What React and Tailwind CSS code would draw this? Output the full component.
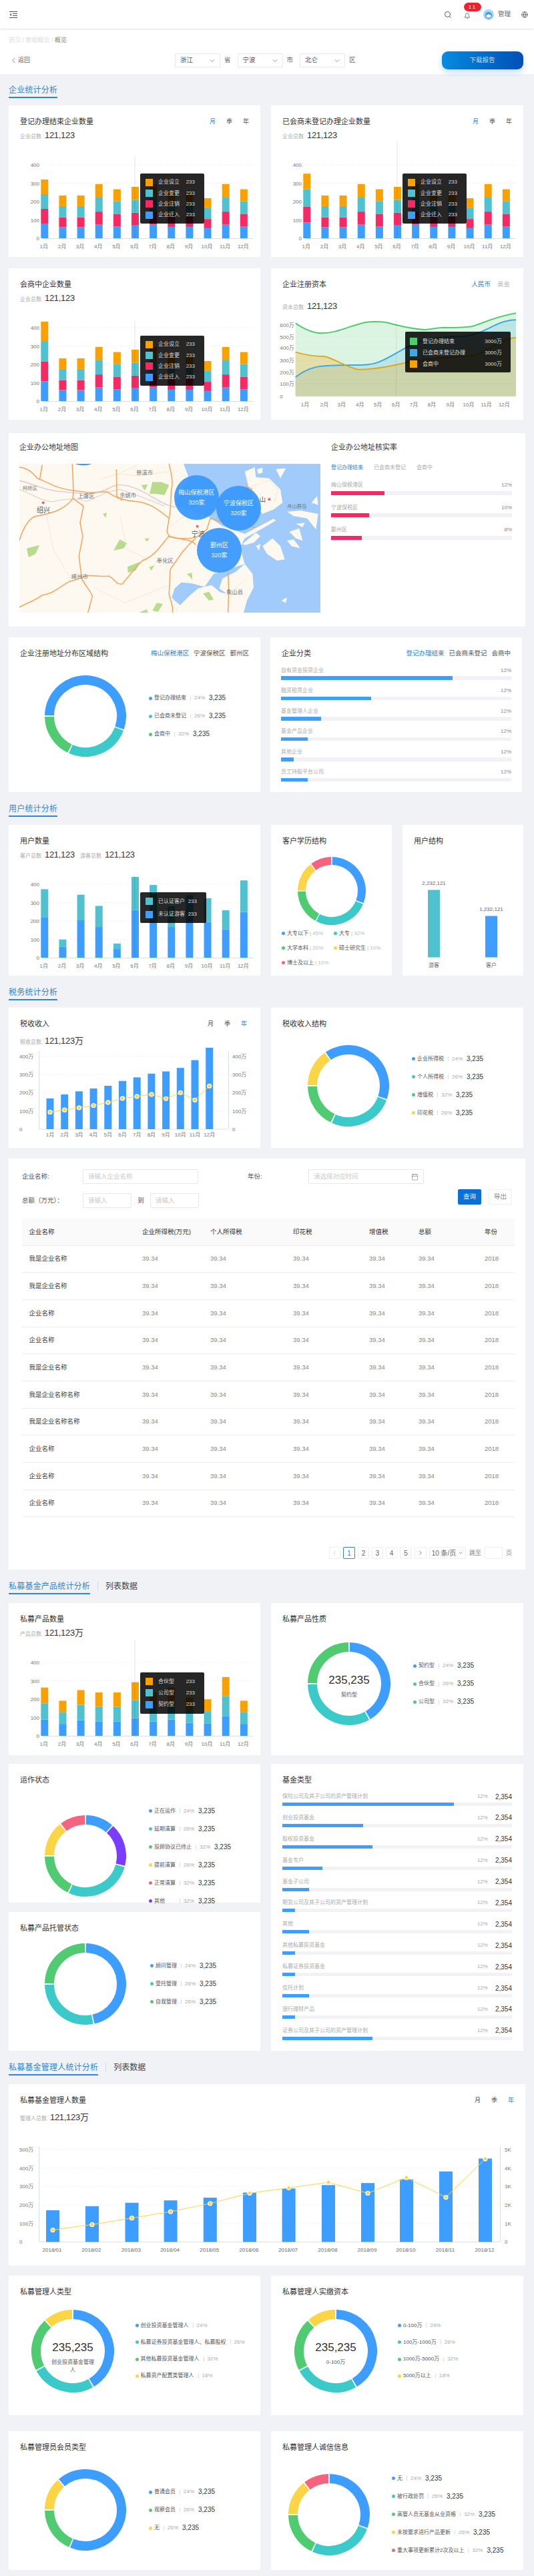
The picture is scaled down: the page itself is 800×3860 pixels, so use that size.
import { Search, Bell, Calendar, ChevronLeft, ChevronRight, ChevronDown, Globe } from "lucide-react";

const BLUE = "#3d9eff";
const RED = "#f42a64";
const TEAL = "#4fc1cf";
const ORANGE = "#f9a100";
const DTEAL = "#3cc9c9";
const GREEN = "#50cb72";
const YELLOW = "#fbd545";
const PINK = "#f4647f";
const PURPLE = "#7a3dff";

const MONTHS = ["1月", "2月", "3月", "4月", "5月", "6月", "7月", "8月", "9月", "10月", "11月", "12月"];

const BASE = [
  [80, 160, 240, 320],
  [60, 114, 175, 233],
  [60, 114, 175, 233],
  [74, 145, 222, 295],
  [65, 133, 201, 267],
  [70, 139, 209, 280],
  [74, 145, 222, 295],
  [62, 125, 187, 250],
  [62, 125, 187, 250],
  [55, 105, 164, 218],
  [74, 145, 222, 295],
  [65, 133, 201, 267],
];
const withFirst = (first) => [first, ...BASE.slice(1)];

const USERS = [
  [221, 373], [59, 99], [204, 343], [167, 282], [47, 77], [260, 440],
  [200, 396], [167, 280], [220, 340], [195, 324], [155, 258], [249, 421],
];
const PRODUCTS = [
  [89, 177, 263], [65, 128, 191], [85, 169, 249], [78, 158, 236], [78, 158, 236], [96, 194, 292],
  [78, 158, 236], [89, 177, 263], [71, 143, 209], [66, 134, 199], [106, 216, 320], [65, 128, 191],
];

const arcPath = (cx, cy, r, a0, a1) => {
  const rad = (a) => ((a - 90) * Math.PI) / 180;
  const x0 = cx + r * Math.cos(rad(a0));
  const y0 = cy + r * Math.sin(rad(a0));
  const x1 = cx + r * Math.cos(rad(a1));
  const y1 = cy + r * Math.sin(rad(a1));
  return `M${x0} ${y0}A${r} ${r} 0 ${a1 - a0 > 180 ? 1 : 0} 1 ${x1} ${y1}`;
};

const Donut = ({ r = 61, thick = 14, segs, children }) => (
  <svg width={r * 2} height={r * 2} className="block shrink-0">
    {segs.map(([color, a0, a1], i) => (
      <path key={i} d={arcPath(r, r, r - thick / 2, a0 + 0.9, a1 - 0.9)} fill="none" stroke={color} strokeWidth={thick} />
    ))}
    {children}
  </svg>
);

const Legend = ({ items, className, rowClass = "h-[27px]" }) => (
  <div className={`flex flex-col ${className}`}>
    {items.map(([color, name, pct, val, nameClass], i) => (
      <div key={i} className={`flex items-center ${rowClass}`}>
        <span className="w-[5px] h-[5px] rounded-full mr-[3px] shrink-0" style={{ background: color }} />
        <span className={`text-[8px] leading-[10px] text-[#555] whitespace-nowrap ${nameClass || ""}`}>{name}</span>
        <span className="w-px h-[7px] bg-[#ddd] ml-[6px] mr-[5px]" />
        <span className="text-[8px] leading-[10px] text-[#aaa]">{pct}</span>
        {val && <span className="text-[10px] leading-[12px] text-[#333] ml-[6px]">{val}</span>}
      </div>
    ))}
  </div>
);

const Card = ({ className = "", children }) => <div className={`relative bg-white ${className}`}>{children}</div>;

const Title = ({ children, right }) => (
  <div className="flex items-center justify-between px-[17px] pt-[17px]">
    <h3 className="text-[11px] leading-[14px] font-normal text-[#333]">{children}</h3>
    {right}
  </div>
);

const Stat = ({ label, value, className = "" }) => (
  <span className={`inline-flex items-baseline ${className}`}>
    <span className="text-[8px] leading-[10px] text-[#aaa]">{label}</span>
    <span className="text-[13px] leading-[16px] tracking-[-0.3px] text-[#333] ml-[5px]">{value}</span>
  </span>
);

const Periods = ({ active, className = "" }) => (
  <div className={`flex gap-[16px] text-[9px] leading-[12px] text-[#555] ${className}`}>
    {["月", "季", "年"].map((p) => (
      <span key={p} className={p === active ? "text-[#2f86d6]" : ""}>{p}</span>
    ))}
  </div>
);

const Tabs = ({ items, className = "" }) => (
  <div className={`flex gap-[7px] text-[9.5px] leading-[12px] text-[#555] ${className}`}>
    {items.map((t, i) => (
      <span key={t} className={i === 0 ? "text-[#2f86d6]" : ""}>{t}</span>
    ))}
  </div>
);

const Tooltip = ({ rows, className, rowClass, nameClass = "w-[41px]" }) => (
  <div className={`absolute bg-black/85 rounded-[2px] ${className}`}>
    {rows.map(([color, name, val]) => (
      <div key={name} className={`flex items-center text-[8px] leading-[10px] text-[#ddd] ${rowClass}`}>
        <span className="w-[11px] h-[11px] mr-[8px] shrink-0" style={{ background: color }} />
        <span className={`whitespace-nowrap ${nameClass}`}>{name}</span>
        <span className="ml-auto whitespace-nowrap">{val}</span>
      </div>
    ))}
  </div>
);

// same geometry on every stacked bar card: 110px for 400, zero line 129px down the svg
const StackChart = ({ data, colors, crossTop }) => (
  <svg width={377} height={157} className="block overflow-visible">
    {[0, 100, 200, 300, 400].map((t) => {
      const y = 129 - t * 0.275;
      return (
        <g key={t}>
          {t > 0 && <line x1={52} x2={366} y1={y} y2={y} stroke="#eee" strokeDasharray="3 2" strokeWidth={0.7} />}
          <text x={46} y={y + 3} textAnchor="end" fontSize={8} fill="#777">{t}</text>
        </g>
      );
    })}
    <line x1={52} x2={366} y1={129.5} y2={129.5} stroke="#d9dfe8" />
    {data.map((stack, i) => {
      const x = 48.3 + i * 27.14;
      return (
        <g key={i}>
          {stack.map((v, j) => {
            const prev = j ? stack[j - 1] : 0;
            return <rect key={j} x={x} width={11} y={129 - v * 0.275} height={(v - prev) * 0.275} fill={colors[j]} />;
          })}
          <text x={x + 4.5} y={144} textAnchor="middle" fontSize={8} fill="#777">{MONTHS[i]}</text>
        </g>
      );
    })}
    <line x1={189} x2={189} y1={crossTop} y2={129} stroke="#000" strokeOpacity={0.15} strokeWidth={0.7} />
  </svg>
);

const StackCard = ({ title, right, stats, data, colors, crossTop, tooltip, className }) => (
  <Card className={className}>
    <div className="h-[70px]">
      <Title right={right}>{title}</Title>
      <div className="px-[17px] mt-[6px] flex gap-[8px]">
        {stats.map(([l, v]) => <Stat key={l} label={l} value={v} />)}
      </div>
    </div>
    <StackChart data={data} colors={colors} crossTop={crossTop} />
    {tooltip}
  </Card>
);

const FourRows = [
  [ORANGE, "企业设立", "233"],
  [TEAL, "企业变更", "233"],
  [RED, "企业注销", "233"],
  [BLUE, "企业迁入", "233"],
];

const Tip4 = ({ className }) => (
  <Tooltip rows={FourRows} className={`left-[197px] w-[96px] h-[75px] pt-[5px] pl-[8px] pr-[14px] ${className}`} rowClass="h-[16.4px]" />
);

const AreaChart = () => {
  const green = "M110,253 C150,280 190,298 230,298 C290,298 340,270 420,250 C460,243 490,245 520,250 C570,262 620,278 690,282 C730,280 740,272 780,272 C830,275 870,272 900,268 C950,255 1000,225 1101,208";
  const blue = "M110,495 C150,465 190,447 240,445 C290,440 350,442 400,441 C440,440 470,435 490,425 C540,405 580,375 640,345 C700,320 780,313 860,312 C910,310 950,290 1000,265 C1040,245 1070,238 1101,238";
  const orange = "M110,383 C150,395 190,402 240,402 C290,415 330,445 390,461 C430,462 480,455 510,450 C570,440 620,425 700,415 C780,405 850,405 920,395 C980,375 1030,325 1101,317";
  const close = " L1101,581 L110,581 Z";
  const labels = [["600万", 263], ["500万", 315], ["400万", 365], ["300万", 422], ["200万", 475], ["100万", 526], ["0", 583]];
  const xs = [153, 240, 317, 400, 480, 562, 642, 722, 806, 888, 968, 1048];
  return (
    <svg width={378} height={165} viewBox="0 195 1134 495" className="block">
      <path d={green + close} fill={GREEN} fillOpacity={0.2} />
      <path d={blue + close} fill="#3ea8e5" fillOpacity={0.2} />
      <path d={orange + close} fill={ORANGE} fillOpacity={0.25} />
      {labels.map(([t, y]) => (
        <g key={t}>
          {t !== "0" && <line x1={110} x2={1101} y1={y} y2={y} stroke="#000" strokeOpacity={0.06} strokeDasharray="9 6" strokeWidth={2} />}
          <text x={40} y={y + 8} fontSize={24} fill="#777">{t}</text>
        </g>
      ))}
      <path d={green} fill="none" stroke={GREEN} strokeWidth={6} />
      <path d={blue} fill="none" stroke="#3ea8e5" strokeWidth={6} />
      <path d={orange} fill="none" stroke="#e0a91a" strokeWidth={6} />
      <line x1={110} x2={1101} y1={582} y2={582} stroke="#d9dfe8" strokeWidth={3} />
      <line x1={563} x2={563} y1={238} y2={580} stroke="#000" strokeOpacity={0.12} strokeWidth={2} />
      {MONTHS.map((m, i) => (
        <text key={m} x={xs[i]} y={627} textAnchor="middle" fontSize={24} fill="#777">{m}</text>
      ))}
    </svg>
  );
};

const MapLabel = ({ x, y, size = 25, fill = "#777", children }) => (
  <text x={x} y={y} textAnchor="middle" fontSize={size} fill={fill}>{children}</text>
);

const MapBubble = ({ className, name }) => (
  <div className={`absolute w-[67px] h-[67px] rounded-full bg-[#3b99fc]/95 flex flex-col items-center justify-center text-[9px] leading-[15px] text-white/90 ${className}`}>
    <span className="whitespace-nowrap">{name}</span>
    <span>320家</span>
  </div>
);

const RoadMap = () => (
  <div className="relative w-[451px] h-[223px] overflow-hidden">
    <svg width={451} height={223} viewBox="27 15 1353 669" className="block">
      <rect x={27} y={15} width={1353} height={669} fill="#fdf9f1" />
      <path d="M765,15 L790,80 L745,150 L725,200 L880,255 L940,295 L1040,330 L1170,262 L1180,270 L1120,305 L1040,350 L1020,390 L1030,430 L1040,465 L1075,510 L1080,570 L1050,630 L1035,684 L1380,684 L1380,15 Z" fill="#a0cbfb" />
      <path d="M712,615 L725,575 L755,548 L800,552 L860,568 L900,510 L1040,465 L1000,500 L940,530 L925,575 L960,600 L930,592 L890,560 L830,575 L790,610 L750,650 L725,630 Z" fill="#a0cbfb" />
      <g fill="#fdf9f1">
        <path d="M1040,50 L1085,30 L1090,75 L1150,80 L1200,130 L1210,190 L1170,220 L1120,240 L1100,215 L1060,130 Z" />
        <path d="M1095,40 L1120,32 L1120,55 L1100,60 Z" />
        <path d="M1180,38 L1225,35 L1200,80 Z" />
        <path d="M1030,375 L1090,325 L1110,340 L1080,370 L1040,380 Z" />
        <path d="M1120,385 L1165,350 L1200,385 L1220,445 L1185,450 L1140,420 Z" />
        <path d="M1090,385 L1110,375 L1105,405 Z" />
        <path d="M1240,320 L1285,305 L1300,360 L1270,350 Z" />
        <path d="M1230,360 L1260,355 L1290,395 L1250,385 Z" />
        <path d="M1230,230 L1290,225 L1370,240 L1360,310 L1320,260 L1260,250 Z" />
        <path d="M1270,285 L1310,280 L1300,300 Z" />
        <path d="M1205,630 L1230,615 L1225,640 Z" />
        <path d="M1340,190 L1365,160 L1370,200 Z" />
      </g>
      <g fill="#b8dc8c">
        <path d="M60,395 L118,380 L100,420 L68,435 Z" />
        <path d="M450,405 L478,355 L512,372 L495,395 Z" />
        <path d="M612,150 L625,97 L665,97 L700,110 L680,155 L640,150 Z" />
        <path d="M513,478 L570,455 L550,495 L515,505 Z" />
        <path d="M402,240 L420,235 L415,258 Z" />
        <path d="M575,110 L605,108 L590,135 Z" />
        <path d="M780,510 L802,505 L805,535 Z" />
        <path d="M852,598 L880,590 L900,625 L880,630 Z" />
        <path d="M625,675 L645,640 L672,645 L650,680 Z" />
        <path d="M610,480 L635,470 L620,495 Z" />
        <path d="M590,350 L612,350 L600,365 Z" />
        <path d="M565,684 L600,668 L605,684 Z" />
      </g>
      <g fill="none" stroke="#f3e3cb" strokeWidth={2.5}>
        <path d="M390,85 L470,60 L560,20" />
        <path d="M470,60 L560,70 L700,50" />
        <path d="M150,250 L180,400 L240,500 L260,540" />
        <path d="M480,250 L510,400 L600,440" />
        <path d="M700,300 L780,240" />
        <path d="M360,570 L500,640 L600,600 L700,560" />
        <path d="M1060,120 L1150,90 L1190,130 L1170,200" />
        <path d="M970,620 L1010,560 L1050,530" />
      </g>
      <g fill="none" stroke="#dfd8d2" strokeWidth={4}>
        <path d="M27,130 C80,150 130,185 180,185 C240,170 300,170 330,185 C380,160 440,135 480,130 C540,150 620,180 680,205" />
      </g>
      <g fill="none" stroke="#e8c3cb" strokeWidth={4}>
        <path d="M27,90 C100,110 160,140 225,140 C300,150 360,160 430,125 C470,100 520,105 600,150 C650,180 690,205 730,210" />
      </g>
      <g fill="none" stroke="#f9a35a" strokeWidth={4.5}>
        <path d="M27,30 C70,35 90,60 110,82 C150,95 200,130 270,135 L340,145 L420,140 C450,160 480,180 560,185 C620,195 650,220 700,260" />
        <path d="M265,15 L270,135 L268,170" />
        <path d="M463,40 L465,160 L490,180" />
        <path d="M130,20 L118,85" />
        <path d="M27,360 C45,300 70,265 95,252 C160,240 230,225 268,170 L315,205 L300,280 L312,340 L295,430 L307,530 C320,560 350,590 355,610 L335,684" />
        <path d="M27,660 C60,640 100,630 130,605 C180,600 220,560 250,545 L300,530 C340,505 370,525 430,520 C460,535 460,560 490,555 C520,520 530,500 580,450 C640,430 670,370 700,340 C760,360 800,350 820,380" />
        <path d="M700,15 C710,60 720,100 710,130 L705,230 L690,320 L700,340 C730,355 800,355 830,340 L870,310 L885,260" />
        <path d="M820,350 C770,390 740,440 705,490 L700,600 C710,640 720,660 715,684" />
        <path d="M965,500 L968,580 L965,684" />
        <path d="M885,260 C950,280 1000,300 1090,300" />
        <path d="M1045,115 L1075,130" />
      </g>
      <ellipse cx={315} cy={12} rx={38} ry={10} fill="#3b99fc" />
      <g fill="#ee5f6c">
        <circle cx={134} cy={190} r={6} />
        <circle cx={827} cy={296} r={6} />
        <circle cx={1150} cy={175} r={6} />
      </g>
      <MapLabel x={590} y={62}>慈溪市</MapLabel>
      <MapLabel x={75} y={131} size={22}>柯桥区</MapLabel>
      <MapLabel x={327} y={169}>上虞区</MapLabel>
      <MapLabel x={515} y={164}>余姚市</MapLabel>
      <MapLabel x={135} y={235} size={30} fill="#555">绍兴</MapLabel>
      <MapLabel x={830} y={341} size={30} fill="#555">宁波</MapLabel>
      <MapLabel x={682} y={459}>奉化区</MapLabel>
      <MapLabel x={298} y={531}>嵊州市</MapLabel>
      <MapLabel x={995} y={599}>象山县</MapLabel>
      <MapLabel x={1275} y={213} size={22}>舟山群岛</MapLabel>
      <MapLabel x={1120} y={186} size={28} fill="#555">山</MapLabel>
    </svg>
    <MapBubble className="left-[232px] top-[17px]" name="梅山保税港区" />
    <MapBubble className="left-[295px] top-[33px]" name="宁波保税区" />
    <MapBubble className="left-[266px] top-[96px]" name="鄞州区" />
  </div>
);

const Progress = ({ label, pct, width, color, trackClass = "h-[5.5px]", labelClass = "text-[#aaa]" }) => (
  <div>
    <div className="flex justify-between text-[8px] leading-[10px]">
      <span className={labelClass}>{label}</span>
      <span className="text-[#888]">{pct}</span>
    </div>
    <div className={`mt-[3.5px] bg-[#f0f2f5] ${trackClass}`}>
      <div className="h-full" style={{ width, background: color }} />
    </div>
  </div>
);

const Section = ({ className, title, list }) => (
  <div className={`flex items-start ${className}`}>
    <span className="text-[12px] leading-[14px] pb-[3px] border-b-2 border-[#2f86d6] text-[#2f86d6] tracking-[0.2px]">{title}</span>
    {list && (
      <>
        <span className="w-px h-[14px] bg-[#d5d9e0] ml-[11px] mr-[11px]" />
        <span className="text-[12px] leading-[14px] text-[#444]">{list}</span>
      </>
    )}
  </div>
);

const FakeSelect = ({ label, className = "" }) => (
  <div className={`flex items-center justify-between w-[68px] h-[21px] pl-[7px] pr-[5px] border border-[#e6e8eb] rounded-[2px] text-[9.5px] text-[#555] ${className}`}>
    {label}
    <ChevronDown size={12} strokeWidth={1.2} className="text-[#555]" />
  </div>
);

const FakeInput = ({ placeholder, className = "", children }) => (
  <div className={`flex items-center justify-between h-[22px] px-[7px] border border-[#e4e6e9] rounded-[2px] text-[9.5px] text-[#ccc] ${className}`}>
    {placeholder}
    {children}
  </div>
);

const TABLE_NAMES = ["我是企业名称", "我是企业名称", "企业名称", "企业名称", "我是企业名称", "我是企业名称名称", "我是企业名称名称", "企业名称", "企业名称", "企业名称"];

const Pager = ({ className = "", children, active }) => (
  <span className={`flex items-center justify-center h-[18px] rounded-[2px] border text-[10px] ${active ? "border-[#2f86d6] text-[#2f86d6]" : "border-[#eceef0] text-[#666]"} ${className}`}>
    {children}
  </span>
);

const FUND_TYPES = [
  ["保险公司及其子公司的资产管理计划", 257],
  ["创业投资基金", 121],
  ["股权投资基金", 135],
  ["基金专户", 60],
  ["基金子公司", 40],
  ["期货公司及其子公司的资产管理计划", 19],
  ["其他", 40],
  ["其他私募投资基金", 19],
  ["私募证券投资基金", 19],
  ["信托计划", 40],
  ["银行理财产品", 19],
  ["证券公司及其子公司的资产管理计划", 135],
];

const CenterText = ({ cx, cy, sub }) => (
  <>
    <text x={cx} y={cy - 0.5} textAnchor="middle" fontSize={17} fill="#333">235,235</text>
    {sub.map((s, i) => (
      <text key={s} x={cx} y={cy + 19 + i * 12} textAnchor="middle" fontSize={8} fill="#555">{s}</text>
    ))}
  </>
);

const TAX_BAR_TOPS = [1346, 1328, 1314, 1301, 1289, 1267, 1251, 1234, 1224, 1208, 1173, 1114];
const TAX_LINE = [1408, 1398, 1388, 1378, 1364, 1346, 1337, 1328, 1347, 1320, 1353, 1290];

const TaxChart = () => {
  const y0 = 122;
  const toY = (z) => y0 - (1485 - z) * 0.3316;
  const cx = (i) => 62 + i * 21.7;
  const ticks = ["0", "100万", "200万", "300万", "400万"];
  return (
    <svg width={377} height={150} className="block">
      {ticks.map((t, i) => {
        const y = y0 - i * 27.3;
        return (
          <g key={t}>
            {i > 0 && <line x1={45} x2={329} y1={y} y2={y} stroke="#eee" strokeDasharray="3 2" strokeWidth={0.7} />}
            <text x={16} y={y + 3} fontSize={8} fill="#777">{t}</text>
            <text x={335} y={y + 3} fontSize={8} fill="#777">{t}</text>
          </g>
        );
      })}
      <path d={`M45.5 5V${y0}H329.5V5`} fill="none" stroke="#d9dfe8" />
      {TAX_BAR_TOPS.map((z, i) => (
        <rect key={i} x={cx(i) - 5.5} width={11} y={toY(z)} height={y0 - toY(z)} fill={BLUE} />
      ))}
      <polyline points={TAX_LINE.map((z, i) => `${cx(i)},${toY(z)}`).join(" ")} fill="none" stroke={YELLOW} strokeWidth={1} />
      {TAX_LINE.map((z, i) => (
        <circle key={i} cx={cx(i)} cy={toY(z)} r={3} fill={YELLOW} stroke="#fff" strokeWidth={1.2} />
      ))}
      {MONTHS.map((m, i) => (
        <text key={m} x={cx(i)} y={y0 + 11} textAnchor="middle" fontSize={8} fill="#777">{m}</text>
      ))}
    </svg>
  );
};

const MGR_TOPS = [494, 482, 472, 465, 457, 442, 430, 420, 414, 403, 380, 342];
const MGR_LINE = [552, 536, 517, 498, 474, 444, 428, 412, 444, 398, 456, 343];
const MGR_X = [66, 125, 184.5, 242.6, 301.8, 361, 419.6, 479, 538, 596, 655, 714];

const ManagerChart = () => {
  const y0 = 156.4;
  const toY = (z) => y0 - (587 - z) * 0.51;
  const left = ["0", "100万", "200万", "300万", "400万", "500万"];
  const right = ["0", "1K", "2K", "3K", "4K", "5K"];
  return (
    <svg width={771} height={192} className="block">
      {left.map((t, i) => {
        const y = y0 - i * 27.7;
        return (
          <g key={t}>
            {i > 0 && <line x1={45} x2={736} y1={y} y2={y} stroke="#eee" strokeDasharray="3 2" strokeWidth={0.7} />}
            <text x={16} y={y + 3} fontSize={8} fill="#777">{t}</text>
            <text x={743} y={y + 3} fontSize={8} fill="#777">{right[i]}</text>
          </g>
        );
      })}
      <path d={`M45.5 13V${y0}H736.5V13`} fill="none" stroke="#d9dfe8" />
      {MGR_TOPS.map((z, i) => (
        <rect key={i} x={MGR_X[i] - 10} width={20} y={toY(z)} height={y0 - toY(z)} fill={BLUE} />
      ))}
      <polyline points={MGR_LINE.map((z, i) => `${MGR_X[i]},${toY(z)}`).join(" ")} fill="none" stroke={YELLOW} strokeWidth={1} />
      {MGR_LINE.map((z, i) => (
        <circle key={i} cx={MGR_X[i]} cy={toY(z)} r={3} fill={YELLOW} stroke="#fff" strokeWidth={1.2} />
      ))}
      {MGR_X.map((x, i) => (
        <text key={x} x={x - 1} y={y0 + 15} textAnchor="middle" fontSize={8} fill="#666">{`2018/${String(i + 1).padStart(2, "0")}`}</text>
      ))}
    </svg>
  );
};

const App = () => {
  return (
    <div className="w-[800px] h-[3860px] overflow-hidden bg-[#f0f2f5] font-['Liberation_Sans','Noto_Sans_CJK_SC',sans-serif]">
      <header className="relative z-10 flex items-center justify-between h-[43px] bg-white shadow-[0_1px_2px_rgba(0,0,0,0.12)] pl-[14px] pr-[9px]">
        <svg width={12} height={12} viewBox="0 0 12 12" fill="none" stroke="#555" strokeWidth={1}>
          <path d="M0 1.5H12M5 4.5H12M5 7.5H12M0 10.5H12" />
          <path d="M3 4L0.5 6L3 8Z" fill="#555" stroke="none" />
        </svg>
        <div className="flex items-center">
          <Search size={12} className="text-[#555]" />
          <div className="relative ml-[18px]">
            <Bell size={10} className="text-[#555] mt-[5px]" />
            <span className="absolute -top-[10px] -left-[0px] w-[26px] h-[13px] rounded-full bg-[#f21f2d] text-white text-[8px] leading-[13px] text-center tracking-[2px]">11</span>
          </div>
          <svg width={16} height={16} viewBox="0 0 16 16" className="ml-[19px]">
            <circle cx={8} cy={8} r={8} fill="#a9d6f7" />
            <circle cx={8} cy={9} r={5} fill="#3d9be8" />
            <ellipse cx={8} cy={10} rx={3.5} ry={2.5} fill="#fff" />
          </svg>
          <span className="ml-[6px] text-[9.5px] text-[#666]">管理</span>
          <Globe size={10} className="ml-[16px] text-[#555]" />
        </div>
      </header>

      <div className="h-[68px] bg-white">
        <div className="px-[13px] pt-[11px] text-[9px] leading-[12px] text-[#ddd]">
          首页 / 数据概览 / <span className="text-[#888]">概览</span>
        </div>
        <div className="flex items-center mt-[11px] pl-[15px] h-[27px]">
          <ChevronLeft size={13} strokeWidth={1.3} className="text-[#555] -ml-[1px]" />
          <span className="text-[9px] text-[#666] w-[20px]">返回</span>
          <FakeSelect label="浙江" className="ml-[215px]" />
          <span className="ml-[6px] text-[9.5px] text-[#666]">省</span>
          <FakeSelect label="宁波" className="ml-[10px]" />
          <span className="ml-[6px] text-[9.5px] text-[#666]">市</span>
          <FakeSelect label="北仑" className="ml-[10px]" />
          <span className="ml-[6px] text-[9.5px] text-[#666]">区</span>
          <button className="ml-[129px] w-[122px] h-[27px] rounded-[9px] bg-gradient-to-r from-[#0a8ae0] to-[#0450b8] text-[9.5px] text-white/75 shadow-[0_4px_8px_rgba(30,140,240,0.3)]">
            下载报告
          </button>
        </div>
      </div>

      <div className="px-[13px]">
        <Section className="mt-[17px]" title="企业统计分析" />
        <div className="grid grid-cols-[377px_378px] gap-x-[16px] gap-y-[17px] mt-[11px]">
          <StackCard
            className="h-[227px]"
            title="登记办理结束企业数量"
            right={<Periods active="月" />}
            stats={[["企业总数", "121,123"]]}
            data={withFirst([80, 160, 240, 320])}
            colors={[BLUE, RED, TEAL, ORANGE]}
            crossTop={5}
            tooltip={<Tip4 className="top-[102px]" />}
          />
          <StackCard
            className="h-[227px]"
            title="已会商未登记办理企业数量"
            right={<Periods active="月" />}
            stats={[["企业总数", "121,123"]]}
            data={withFirst([86, 173, 267, 352])}
            colors={[BLUE, RED, TEAL, ORANGE]}
            crossTop={-16}
            tooltip={<Tip4 className="top-[102px]" />}
          />
          <StackCard
            className="h-[227px]"
            title="会商中企业数量"
            stats={[["企业总数", "121,123"]]}
            data={withFirst([108, 215, 327, 433])}
            colors={[BLUE, RED, TEAL, ORANGE]}
            crossTop={9}
            tooltip={<Tip4 className="top-[101px]" />}
          />
          <Card className="h-[227px]">
            <div className="h-[63px]">
              <Title right={<Tabs items={["人民币", "美金"]} className="gap-[10px] text-[8px] text-[#bbb] pr-[3px]" />}>企业注册资本</Title>
              <div className="px-[17px] mt-[13px]"><Stat label="资本总数" value="121,123" /></div>
            </div>
            <AreaChart />
            <Tooltip
              className="left-[201px] top-[95px] w-[158px] h-[61px] pt-[6px] pl-[7px] pr-[13px]"
              rowClass="h-[17px] text-[8.5px]"
              nameClass=""
              rows={[[GREEN, "登记办理结束", "3000万"], ["#3ea8e5", "已会商未登记办理", "3000万"], [ORANGE, "会商中", "3000万"]]}
            />
          </Card>
        </div>

        <Card className="h-[290px] mt-[20px]">
          <div className="flex pl-[16px]">
            <div className="w-[451px]">
              <h3 className="pt-[14px] text-[11px] leading-[14px] font-normal text-[#333]">企业办公地址地图</h3>
              <div className="mt-[18px]"><RoadMap /></div>
            </div>
            <div className="w-[271px] ml-[16px]">
              <h3 className="pt-[14px] text-[11px] leading-[14px] font-normal text-[#333]">企业办公地址核实率</h3>
              <div className="flex gap-[16px] mt-[19px] text-[8px] leading-[10px] text-[#aaa]">
                <span className="text-[#2f86d6]">登记办理结束</span>
                <span>已会商未登记</span>
                <span>会商中</span>
              </div>
              <div className="flex flex-col gap-[14px] mt-[16px]">
                <Progress label="梅山保税港区" pct="12%" width="80px" color={RED} trackClass="h-[6px]" />
                <Progress label="宁波保税区" pct="10%" width="57px" color={RED} trackClass="h-[6px]" />
                <Progress label="鄞州区" pct="8%" width="46px" color={RED} trackClass="h-[6px]" />
              </div>
            </div>
          </div>
        </Card>

        <div className="flex gap-x-[15px] mt-[16px]">
          <Card className="w-[377px] h-[232px]">
            <Title right={<Tabs items={["梅山保税港区", "宁波保税区", "鄞州区"]} />}>企业注册地址分布区域结构</Title>
            <div className="flex items-center pl-[54px] mt-[26px]">
              <Donut segs={[[BLUE, -90, 110], [DTEAL, 110, 205], [GREEN, 205, 270]]} />
              <Legend
                className="ml-[34px]"
                items={[[BLUE, "登记办理结束", "24%", "3,235"], [DTEAL, "已会商未登记", "26%", "3,235"], [GREEN, "会商中", "32%", "3,235"]]}
              />
            </div>
          </Card>
          <Card className="w-[377px] h-[232px]">
            <Title right={<Tabs items={["登记办理结束", "已会商未登记", "会商中"]} />}>企业分类</Title>
            <div className="flex flex-col gap-[11.6px] px-[16px] mt-[13.5px]">
              {[["自有资金投资企业", "257px"], ["融资租赁企业", "135px"], ["基金管理人企业", "60px"], ["基金产品企业", "40px"], ["其他企业", "19px"], ["员工持股平台公司", "40px"]].map(([l, w]) => (
                <Progress key={l} label={l} pct="12%" width={w} color={BLUE} />
              ))}
            </div>
          </Card>
        </div>

        <Section className="mt-[18px]" title="用户统计分析" />
        <div className="flex gap-x-[16px] mt-[12px]">
          <StackCard
            className="w-[377px] h-[226px]"
            title="用户数量"
            stats={[["客户总数", "121,123"], ["游客总数", "121,123"]]}
            data={USERS}
            colors={[BLUE, TEAL]}
            crossTop={5}
            tooltip={
              <Tooltip
                className="left-[197px] top-[101px] w-[99px] h-[46px] pt-[4px] pl-[8px] pr-[14px]"
                rowClass="h-[19.5px] text-[8.5px]"
                nameClass="w-[41px]"
                rows={[[TEAL, "已认证客户", "233"], [BLUE, "未认证游客", "233"]]}
              />
            }
          />
          <Card className="w-[181px] h-[226px]">
            <Title>客户学历结构</Title>
            <div className="pl-[39.5px] mt-[16.5px]">
              <Donut r={51} thick={12} segs={[[BLUE, 0, 112], [DTEAL, 112, 208], [GREEN, 208, 270], [YELLOW, 270, 322], [PINK, 322, 360]]} />
            </div>
            <div className="grid grid-cols-[78px_1fr] px-[16px] mt-[2px] text-[8px] text-[#555] whitespace-nowrap">
              {[[BLUE, "大专以下", "45%"], [DTEAL, "大专", "32%"], [GREEN, "大学本科", "20%"], [YELLOW, "硕士研究生", "10%"], [PINK, "博士及以上", "10%"]].map(([c, n, p]) => (
                <div key={n} className="flex items-center h-[22px]">
                  <span className="w-[5px] h-[5px] rounded-full mr-[3px]" style={{ background: c }} />
                  {n}
                  <span className="text-[#bbb] ml-[2px]">| {p}</span>
                </div>
              ))}
            </div>
          </Card>
          <Card className="w-[181px] h-[226px]">
            <Title>用户结构</Title>
            <svg width={181} height={195} className="block">
              <rect x={38} y={66.5} width={18} height={101} fill={TEAL} />
              <rect x={124} y={105.5} width={18} height={62} fill={BLUE} />
              <text x={47} y={58.5} textAnchor="middle" fontSize={8} fill="#666">2,232,121</text>
              <text x={133} y={97.5} textAnchor="middle" fontSize={8} fill="#666">1,232,121</text>
              <text x={47} y={182} textAnchor="middle" fontSize={8} fill="#666">游客</text>
              <text x={133} y={182} textAnchor="middle" fontSize={8} fill="#666">客户</text>
            </svg>
          </Card>
        </div>

        <Section className="mt-[18px]" title="税务统计分析" />
        <div className="grid grid-cols-[377px_378px] gap-x-[16px] mt-[11px]">
          <Card className="h-[210px]">
            <div className="h-[60px]">
              <Title right={<Periods active="年" className="pr-[3px]" />}>税收收入</Title>
              <div className="px-[17px] mt-[6px]"><Stat label="税收总数" value="121,123万" /></div>
            </div>
            <TaxChart />
          </Card>
          <Card className="h-[210px]">
            <Title>税收收入结构</Title>
            <div className="flex items-center pl-[55px] mt-[25px]">
              <Donut segs={[[BLUE, -35, 110], [DTEAL, 110, 205], [GREEN, 205, 270], [YELLOW, 270, 325]]} />
              <Legend
                className="ml-[34px]"
                items={[[BLUE, "企业所得税", "24%", "3,235"], [DTEAL, "个人所得税", "26%", "3,235"], [GREEN, "增值税", "32%", "3,235"], [YELLOW, "印花税", "26%", "3,235"]]}
              />
            </div>
          </Card>
        </div>

        <Card className="h-[616px] mt-[16px] px-[20px] pt-[16px]">
          <div className="flex items-center text-[9.5px] text-[#555]">
            <span className="w-[91px]">企业名称:</span>
            <FakeInput placeholder="请输入企业名称" className="w-[173px]" />
            <span className="w-[91px] ml-[74px]">年份:</span>
            <FakeInput placeholder="请选择对应时间" className="w-[173px]">
              <Calendar size={11} strokeWidth={1.2} className="text-[#666]" />
            </FakeInput>
          </div>
          <div className="flex items-start mt-[8px] text-[9.5px] text-[#555]">
            <div className="flex items-center mt-[6px]">
              <span className="w-[91px]">总额（万元）：</span>
              <FakeInput placeholder="请输入" className="w-[73px]" />
              <span className="w-[28px] text-center">到</span>
              <FakeInput placeholder="请输入" className="w-[73px]" />
            </div>
            <button className="ml-auto w-[35px] h-[23px] rounded-[2px] bg-[#0a6fd6] text-white/90">查询</button>
            <button className="ml-[11px] w-[35px] h-[23px] rounded-[2px] border border-[#eceef0] text-[#888]">导出</button>
          </div>
          <table className="w-[738px] mt-[16px] table-fixed border-collapse text-[9.5px]">
            <colgroup>
              <col className="w-[169.5px]" />
              <col className="w-[102px]" />
              <col className="w-[124px]" />
              <col className="w-[114px]" />
              <col className="w-[74px]" />
              <col className="w-[99px]" />
              <col className="w-[55.5px]" />
            </colgroup>
            <thead>
              <tr className="h-[40px] bg-[#fafafa] border-b border-[#eee] text-left text-[#333]">
                {["企业名称", "企业所得税(万元)", "个人所得税", "印花税", "增值税", "总额", "年份"].map((h) => (
                  <th key={h} className="pl-[10.5px] font-normal whitespace-nowrap">{h}</th>
                ))}
              </tr>
            </thead>
            <tbody>
              {TABLE_NAMES.map((name, i) => (
                <tr key={i} className="h-[40.7px] border-b border-[#eee] text-[#888]">
                  <td className="pl-[10.5px] text-[#444]">{name}</td>
                  {[1, 2, 3, 4, 5].map((c) => <td key={c} className="pl-[10.5px]">39.34</td>)}
                  <td className="pl-[10.5px]">2018</td>
                </tr>
              ))}
            </tbody>
          </table>
          <div className="flex items-center justify-end gap-[4px] mt-[45px] text-[9px] text-[#888]">
            <Pager className="w-[17px] text-[#ccc]"><ChevronLeft size={10} /></Pager>
            <Pager className="w-[18px]" active>1</Pager>
            <Pager className="w-[17px]">2</Pager>
            <Pager className="w-[17px]">3</Pager>
            <Pager className="w-[17px]">4</Pager>
            <Pager className="w-[18px]">5</Pager>
            <Pager className="w-[18px]"><ChevronRight size={10} /></Pager>
            <Pager className="w-[55px] gap-[3px] text-[8px]">10 条/页<ChevronDown size={8} /></Pager>
            <span className="ml-[1px]">跳至</span>
            <Pager className="w-[27px] ml-[1px]" />
            <span className="ml-[1px]">页</span>
          </div>
        </Card>

        <Section className="mt-[18px]" title="私募基金产品统计分析" list="列表数据" />
        <div className="grid grid-cols-[377px_378px] gap-x-[16px] mt-[13px]">
          <StackCard
            className="h-[228px]"
            title="私募产品数量"
            stats={[["产品总数", "121,123万"]]}
            data={PRODUCTS}
            colors={[BLUE, TEAL, ORANGE]}
            crossTop={-15}
            tooltip={
              <Tooltip
                className="left-[197px] top-[104px] w-[96px] h-[62px] pt-[5px] pl-[8px] pr-[14px]"
                rowClass="h-[17.3px]"
                rows={[[ORANGE, "合伙型", "233"], [TEAL, "公司型", "233"], [BLUE, "契约型", "233"]]}
              />
            }
          />
          <Card className="h-[228px]">
            <Title>私募产品性质</Title>
            <div className="flex items-center pl-[54.5px] mt-[28px]">
              <Donut r={62} segs={[[BLUE, 0, 150], [DTEAL, 150, 270], [GREEN, 270, 360]]}>
                <CenterText cx={62} cy={62} sub={["契约型"]} />
              </Donut>
              <Legend
                className="ml-[34.5px]"
                items={[[BLUE, "契约型", "24%", "3,235", "w-[24px]"], [DTEAL, "合伙型", "26%", "3,235", "w-[24px]"], [GREEN, "公司型", "32%", "3,235", "w-[24px]"]]}
              />
            </div>
          </Card>
        </div>

        <div className="grid grid-cols-[377px_378px] gap-x-[16px] mt-[13px]">
          <div className="flex flex-col gap-y-[14px]">
            <Card className="h-[208px]">
              <Title>运作状态</Title>
              <div className="flex items-center pl-[54px] mt-[26px]">
                <Donut segs={[[BLUE, 0, 42], [PURPLE, 42, 105], [DTEAL, 105, 205], [GREEN, 205, 270], [YELLOW, 270, 322], [PINK, 322, 360]]} />
                <Legend
                  className="ml-[34px]"
                  items={[
                    [BLUE, "正在运作", "24%", "3,235"],
                    [TEAL, "延期清算", "26%", "3,235"],
                    [GREEN, "投顾协议已终止", "32%", "3,235"],
                    [YELLOW, "提前清算", "26%", "3,235"],
                    [PINK, "正常清算", "32%", "3,235"],
                    [PURPLE, "其他", "32%", "3,235", "w-[32px]"],
                  ]}
                />
              </div>
            </Card>
            <Card className="h-[208px]">
              <Title>私募产品托管状态</Title>
              <div className="flex items-center pl-[54px] mt-[15.5px]">
                <Donut segs={[[BLUE, 0, 168], [DTEAL, 168, 270], [GREEN, 270, 360]]} />
                <Legend
                  className="ml-[36px]"
                  items={[[BLUE, "顾问管理", "24%", "3,235"], [DTEAL, "受托管理", "26%", "3,235"], [GREEN, "自我管理", "26%", "3,235"]]}
                />
              </div>
            </Card>
          </div>
          <Card className="h-[430px]">
            <Title>基金类型</Title>
            <div className="flex flex-col gap-[12.9px] px-[17px] mt-[13px]">
              {FUND_TYPES.map(([name, w], i) => (
                <div key={i}>
                  <div className="flex items-center h-[10px] text-[8px] text-[#aaa]">
                    <span className="flex-1">{name}</span>
                    <span>12%</span>
                    <span className="ml-[11px] text-[10px] text-[#333]">2,354</span>
                  </div>
                  <div className="h-[5px] mt-[4px] bg-[#f0f2f5]">
                    <div className="h-full bg-[#3d9eff]" style={{ width: w }} />
                  </div>
                </div>
              ))}
            </div>
          </Card>
        </div>

        <Section className="mt-[18px]" title="私募基金管理人统计分析" list="列表数据" />
        <Card className="h-[272px] mt-[13px]">
          <div className="h-[80px]">
            <Title right={<Periods active="年" />}>私募基金管理人数量</Title>
            <div className="px-[17px] mt-[6px]"><Stat label="管理人总数" value="121,123万" /></div>
          </div>
          <ManagerChart />
        </Card>

        <div className="grid grid-cols-[377px_378px] gap-x-[16px] mt-[15px]">
          <Card className="h-[209px]">
            <Title>私募管理人类型</Title>
            <div className="flex items-center pl-[34px] mt-[19.5px]">
              <Donut r={62} segs={[[BLUE, 0, 150], [DTEAL, 150, 242], [GREEN, 242, 318], [YELLOW, 318, 360]]}>
                <CenterText cx={62} cy={62} sub={["创业投资基金管理", "人"]} />
              </Donut>
              <Legend
                className="ml-[31.5px]"
                rowClass="h-[25.3px]"
                items={[[BLUE, "创业投资基金管理人", "24%"], [DTEAL, "私募证券投资基金管理人、私募股权", "26%"], [GREEN, "其他私募投资基金管理人", "32%"], [YELLOW, "私募资产配置类管理人", "18%"]]}
              />
            </div>
          </Card>
          <Card className="h-[209px]">
            <Title>私募管理人实缴资本</Title>
            <div className="flex items-center pl-[34.5px] mt-[19.5px]">
              <Donut r={62} segs={[[BLUE, 0, 150], [DTEAL, 150, 242], [GREEN, 242, 318], [YELLOW, 318, 360]]}>
                <CenterText cx={62} cy={62} sub={["0-100万"]} />
              </Donut>
              <Legend
                className="ml-[31.5px]"
                rowClass="h-[25.3px]"
                items={[[BLUE, "0-100万", "24%"], [DTEAL, "100万-1000万", "26%"], [GREEN, "1000万-5000万", "32%"], [YELLOW, "5000万以上", "18%"]]}
              />
            </div>
          </Card>
        </div>

        <div className="grid grid-cols-[377px_378px] gap-x-[16px] mt-[24px]">
          <Card className="h-[208px]">
            <Title>私募管理员会员类型</Title>
            <div className="flex items-center pl-[54px] mt-[26px]">
              <Donut segs={[[BLUE, -42, 203], [GREEN, 203, 270], [YELLOW, 270, 318]]} />
              <Legend
                className="ml-[34px]"
                items={[[BLUE, "普通会员", "24%", "3,235"], [GREEN, "观察会员", "26%", "3,235"], [YELLOW, "无", "26%", "3,235"]]}
              />
            </div>
          </Card>
          <Card className="h-[208px]">
            <Title>私募管理人诚信信息</Title>
            <div className="flex items-center pl-[25.5px] mt-[26px]">
              <Donut segs={[[BLUE, 0, 110], [DTEAL, 110, 205], [GREEN, 205, 270], [YELLOW, 270, 322], [PINK, 322, 360]]} />
              <Legend
                className="ml-[33.5px]"
                items={[
                  [BLUE, "无", "24%", "3,235"],
                  [DTEAL, "被行政处罚", "26%", "3,235"],
                  [GREEN, "高管人员无基金从业资格", "32%", "3,235"],
                  [YELLOW, "未按要求进行产品更新", "26%", "3,235"],
                  [PINK, "重大事项更新累计2次及以上", "32%", "3,235"],
                ]}
              />
            </div>
          </Card>
        </div>
      </div>
    </div>
  );
};

export default App;
